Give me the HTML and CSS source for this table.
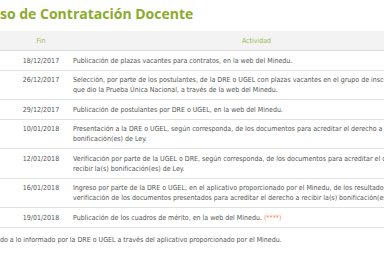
FILE: index.html
```html
<!DOCTYPE html>
<html lang="es">
<head>
<meta charset="utf-8">
<link rel="stylesheet" href="styles.css">
</head>
<body>
<div class="page">
  <h1 class="title">so de Contratación Docente</h1>
  <div class="table">
    <div class="row head">
      <div class="c0"></div>
      <div class="c1">Fin</div>
      <div class="c2 center">Actividad</div>
    </div>
    <div class="row">
      <div class="c0"></div>
      <div class="c1">18/12/2017</div>
      <div class="c2">Publicación de plazas vacantes para contratos, en la web del Minedu.</div>
    </div>
    <div class="row">
      <div class="c0"></div>
      <div class="c1">26/12/2017</div>
      <div class="c2">Selección, por parte de los postulantes, de la DRE o UGEL con plazas vacantes en el grupo de inscripción<br>que dio la Prueba Única Nacional, a través de la web del Minedu.</div>
    </div>
    <div class="row">
      <div class="c0"></div>
      <div class="c1">29/12/2017</div>
      <div class="c2">Publicación de postulantes por DRE o UGEL, en la web del Minedu.</div>
    </div>
    <div class="row">
      <div class="c0"></div>
      <div class="c1">10/01/2018</div>
      <div class="c2">Presentación a la DRE o UGEL, según corresponda, de los documentos para acreditar el derecho a recibir la(s)<br>bonificación(es) de Ley.</div>
    </div>
    <div class="row">
      <div class="c0"></div>
      <div class="c1">12/01/2018</div>
      <div class="c2">Verificación por parte de la UGEL o DRE, según corresponda, de los documentos para acreditar el derecho a<br>recibir la(s) bonificación(es) de Ley.</div>
    </div>
    <div class="row">
      <div class="c0"></div>
      <div class="c1">16/01/2018</div>
      <div class="c2">Ingreso por parte de la DRE o UGEL, en el aplicativo proporcionado por el Minedu, de los resultados de la<br>verificación de los documentos presentados para acreditar el derecho a recibir la(s) bonificación(es) de Ley.</div>
    </div>
    <div class="row">
      <div class="c0"></div>
      <div class="c1">19/01/2018</div>
      <div class="c2">Publicación de los cuadros de mérito, en la web del Minedu. <span class="note">(****)</span></div>
    </div>
  </div>
  <p class="foot">do a lo informado por la DRE o UGEL a través del aplicativo proporcionado por el Minedu.</p>
</div>
</body>
</html>
```

FILE: styles.css
```css
html, body {
  margin: 0;
  padding: 0;
  background: #ffffff;
  overflow: hidden;
}
.page {
  width: 384px;
  height: 253px;
  overflow: hidden;
  font-family: "DejaVu Sans Condensed", "DejaVu Sans", sans-serif;
  font-size: 7px;
  color: #555555;
}
.title {
  margin: 0;
  padding: 5px 0 0 0;
  height: 27px;
  box-sizing: border-box;
  font-family: "Open Sans", "Liberation Sans", sans-serif;
  font-weight: 700;
  font-size: 14px;
  line-height: 18px;
  color: #8cab2c;
  white-space: nowrap;
}
.table {
  width: 440px;
  margin-top: 4px;
}
.row {
  display: grid;
  grid-template-columns: 10px 62px 368px;
  border-bottom: 1px solid #e2e2e2;
  line-height: 10px;
  white-space: nowrap;
}
.row > div {
  padding: 4.5px 0 4px 0;
}
.row .c1 {
  text-align: center;
}
.row .c2 {
  padding-left: 1px;
}
.row .center {
  text-align: center;
}
.head {
  background: #f3f3f3;
  color: #9cbb52;
  border-bottom: 1px solid #dcdcdc;
}
.head > div {
  padding: 4.5px 0 4.5px 0;
}
.note {
  color: #f2895a;
}
.foot {
  margin: 7px 0 0 0;
  line-height: 10px;
  white-space: nowrap;
}
```
